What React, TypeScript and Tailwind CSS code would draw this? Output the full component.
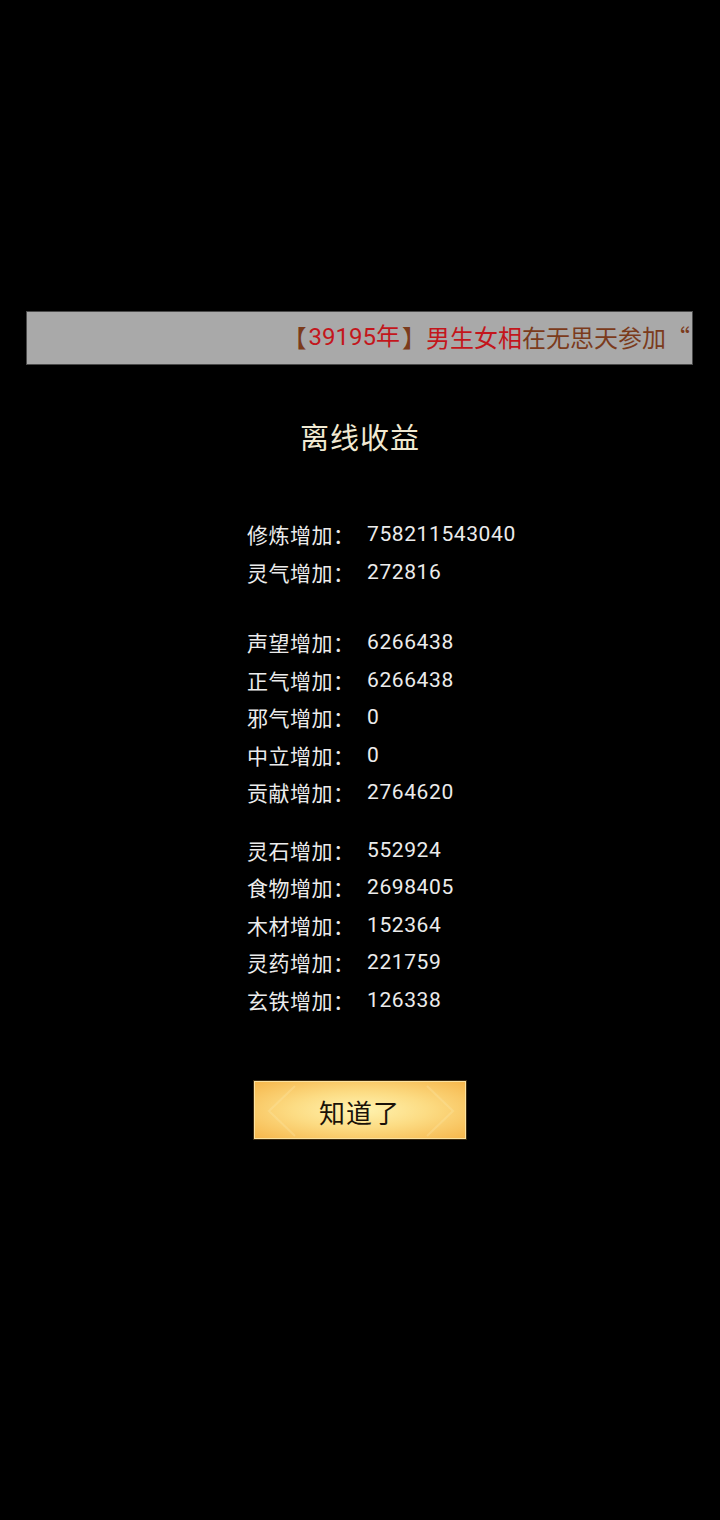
import React from "react";

const groups: [string, string][][] = [
   [
      ["修炼增加：", "758211543040"],
      ["灵气增加：", "272816"],
   ],
   [
      ["声望增加：", "6266438"],
      ["正气增加：", "6266438"],
      ["邪气增加：", "0"],
      ["中立增加：", "0"],
      ["贡献增加：", "2764620"],
   ],
   [
      ["灵石增加：", "552924"],
      ["食物增加：", "2698405"],
      ["木材增加：", "152364"],
      ["灵药增加：", "221759"],
      ["玄铁增加：", "126338"],
   ],
];

const font = {
   fontFamily: '"Noto Sans CJK SC", "Noto Sans", sans-serif',
};

function Row({ label, value }: { label: string; value: string }) {
   return (
      <div className="flex items-center h-[37.5px] text-[21px] text-[#ececec]">
         <span className="w-[120px] shrink-0 tracking-[0.5px]">{label}</span>
         <span className="font-[Roboto] text-[21px] tracking-[0.6px]">{value}</span>
      </div>
   );
}

function App() {
   return (
      <div
         lang="zh-CN"
         className="flex flex-col w-[720px] min-h-[1520px] bg-black pt-[311px]"
         style={font}
      >
         {/* scrolling notice */}
         <div className="flex items-center justify-end h-[54px] ml-[26px] mr-[27px] bg-[#a9a9a9] border border-[#4a4a4a] overflow-hidden whitespace-nowrap pr-[2px] pb-[3px] text-[24px]">
            <span className="text-[#7b3b1c]">【</span>
            <span className="text-[#c3161c] font-[Roboto] ml-[2px] mr-[2px]">39195年</span>
            <span className="text-[#7b3b1c]">】</span>
            <span className="text-[#c3161c]">男生女相</span>
            <span className="text-[#7b3b1c]">在无思天参加“</span>
         </div>

         <div className="flex justify-center mt-[51px] text-[29px] leading-[40px] text-[#f1e9d2] tracking-[1px]">
            离线收益
         </div>

         <div className="flex flex-col ml-[247px] mt-[60px]">
            <div className="flex flex-col">
               {groups[0].map(([l, v]) => (
                  <Row key={l} label={l} value={v} />
               ))}
            </div>
            <div className="flex flex-col mt-[33px]">
               {groups[1].map(([l, v]) => (
                  <Row key={l} label={l} value={v} />
               ))}
            </div>
            <div className="flex flex-col mt-[20px]">
               {groups[2].map(([l, v]) => (
                  <Row key={l} label={l} value={v} />
               ))}
            </div>
         </div>

         <div className="flex justify-center mt-[62px] pr-[1px]">
            <button className="relative flex items-center justify-center w-[212px] h-[58px] border border-[#fbe2a0] shadow-[0_0_0_1px_#3a2a10] bg-[radial-gradient(ellipse_at_center,#fff3b0_0%,#fcdc84_45%,#f6b74c_100%)] overflow-hidden">
               <svg
                  className="absolute inset-0"
                  width="212"
                  height="58"
                  viewBox="0 0 212 58"
               >
                  <path d="M40 4 L14 29 L40 54" fill="none" stroke="#fde9a8" strokeOpacity="0.3" strokeWidth="2" />
                  <path d="M172 4 L198 29 L172 54" fill="none" stroke="#fde9a8" strokeOpacity="0.3" strokeWidth="2" />
               </svg>
               <span className="relative text-[26px] text-[#1a1208] tracking-[1px] pt-[2px]">知道了</span>
            </button>
         </div>
      </div>
   );
}

export default App;
